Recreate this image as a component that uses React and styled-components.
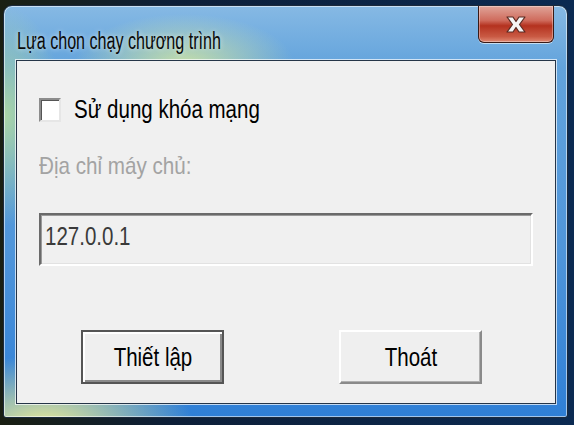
import React from "react";
import styled, { createGlobalStyle } from "styled-components";

const GlobalStyle = createGlobalStyle`
  html, body {
    margin: 0;
    padding: 0;
    background: #0d1f38;
  }
  body {
    font-family: "Liberation Sans", Arial, sans-serif;
  }
`;

const Screen = styled.div`
  width: 574px;
  height: 425px;
  box-sizing: border-box;
  padding: 5px 6px 7px 3px;
  background: linear-gradient(90deg, #1a1f12 0%, #0d1f38 30%, #0b2a52 100%);
`;

const Window = styled.div`
  height: 100%;
  box-sizing: border-box;
  display: flex;
  flex-direction: column;
  border: 1px solid #1c2a3c;
  border-radius: 9px 9px 3px 3px;
  padding: 0 11px 13px 12px;
  background:
    radial-gradient(ellipse 110px 50px at 180px 58px, rgba(214, 232, 160, 0.85), rgba(214, 232, 160, 0) 100%),
    radial-gradient(ellipse 60px 110px at 0px 110px, rgba(180, 220, 160, 0.9), rgba(180, 220, 160, 0) 100%),
    radial-gradient(ellipse 150px 70px at 40px 420px, rgba(236, 236, 150, 1), rgba(236, 236, 150, 0) 100%),
    linear-gradient(180deg, #86b9e4 0%, #62a3dc 15%, #4f95da 60%, #2f7fd6 100%);
  box-shadow: inset 0 0 0 1px rgba(255, 255, 255, 0.55);
`;

const TitleBar = styled.div`
  height: 54px;
  display: flex;
  justify-content: space-between;
  align-items: flex-start;
`;

/* the original is an old bitmap font blown up: tall and narrow glyphs */
const Narrow = styled.span`
  display: inline-block;
  white-space: nowrap;
  transform: scaleX(${(p) => p.$scale || 0.82});
  transform-origin: ${(p) => (p.$center ? "center" : "left")};
`;

const Title = styled.span`
  margin-top: 22px;
  margin-left: 1px;
  font-size: 23px;
  color: #0a0a0a;
  text-shadow: 0 0 6px rgba(255, 255, 255, 0.7);
`;

const CloseButton = styled.div`
  width: 76px;
  height: 37px;
  margin-right: 2px;
  box-sizing: border-box;
  display: flex;
  align-items: center;
  justify-content: center;
  border: 1px solid #3a1a16;
  border-top: none;
  border-radius: 0 0 6px 6px;
  background: linear-gradient(180deg, #e0a59a 0%, #cf6b5c 40%, #b4321f 55%, #c95a44 85%, #e08a74 100%);
  box-shadow: inset 0 0 0 1px rgba(255, 255, 255, 0.35), 0 1px 0 rgba(255, 255, 255, 0.6);
`;

const Client = styled.div`
  flex: 1;
  display: flex;
  flex-direction: column;
  background: #f0f0f0;
  border: 1px solid #253548;
  box-shadow: 0 0 0 1px rgba(255, 255, 255, 0.7);
  padding: 34px 22px 0 22px;
`;

const CheckRow = styled.label`
  display: flex;
  align-items: center;
  gap: 13px;
  font-size: 25px;
  color: #000;
`;

const CheckBox = styled.span`
  width: 22px;
  height: 24px;
  box-sizing: border-box;
  background: #fff;
  border: 2px solid;
  border-color: #8c8c8c #e6e6e6 #e6e6e6 #8c8c8c;
  box-shadow: inset 1px 1px 0 #555;
`;

const FieldLabel = styled.div`
  margin-top: 28px;
  font-size: 24px;
  color: #a3a3a3;
`;

const TextField = styled.div`
  margin-top: 33px;
  width: 494px;
  height: 53px;
  box-sizing: border-box;
  padding: 7px 4px 0;
  background: #f0f0f0;
  border: 2px solid;
  border-color: #6a6a6a #ffffff #ffffff #6a6a6a;
  box-shadow: inset 1px 1px 0 #9a9a9a, inset -1px -1px 0 #e2e2e2;
  font-size: 25px;
  color: #3a3a3a;
`;

const ButtonRow = styled.div`
  display: flex;
  gap: 115px;
  margin-top: 64px;
  padding-left: 42px;
`;

const Button = styled.div`
  width: 143px;
  height: 54px;
  box-sizing: border-box;
  display: flex;
  align-items: center;
  justify-content: center;
  font-size: 25px;
  color: #000;
  background: #efefef;
  border: 2px solid;
  border-color: ${(p) => (p.$default ? "#555 #555 #555 #555" : "#fff #8a8a8a #8a8a8a #fff")};
  box-shadow: ${(p) =>
    p.$default
      ? "inset 2px 2px 0 #fff, inset -2px -2px 0 #8a8a8a"
      : "inset -1px -1px 0 #b0b0b0"};
`;

const App = () => {
  return (
    <>
      <GlobalStyle />
      <Screen>
        <Window>
          <TitleBar>
            <Title>
              <Narrow $scale={0.7}>Lựa chọn chạy chương trình</Narrow>
            </Title>
            <CloseButton>
              <svg width="24" height="19" viewBox="0 0 24 19">
                <path
                  d="M3 2 L9 2 L12 6.5 L15 2 L21 2 L15.5 9.5 L21 17 L15 17 L12 12.5 L9 17 L3 17 L8.5 9.5 Z"
                  fill="#f4f4f4"
                  stroke="#5a2a22"
                  strokeWidth="1.2"
                  strokeLinejoin="round"
                />
              </svg>
            </CloseButton>
          </TitleBar>
          <Client>
            <CheckRow>
              <CheckBox />
              <Narrow>Sử dụng khóa mạng</Narrow>
            </CheckRow>
            <FieldLabel>
              <Narrow $scale={0.86}>Địa chỉ máy chủ:</Narrow>
            </FieldLabel>
            <TextField>
              <Narrow>127.0.0.1</Narrow>
            </TextField>
            <ButtonRow>
              <Button $default>
                <Narrow $center>Thiết lập</Narrow>
              </Button>
              <Button>
                <Narrow $center>Thoát</Narrow>
              </Button>
            </ButtonRow>
          </Client>
        </Window>
      </Screen>
    </>
  );
};

export default App;
